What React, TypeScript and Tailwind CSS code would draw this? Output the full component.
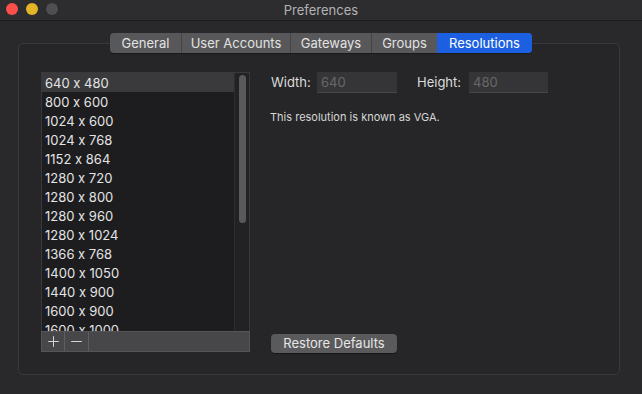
import { Plus, Minus } from "lucide-react";

const tabs = [
  { label: "General", w: "w-[71px]" },
  { label: "User Accounts", w: "w-[109px]" },
  { label: "Gateways", w: "w-[81px]" },
  { label: "Groups", w: "w-[66px]" },
  { label: "Resolutions", w: "w-[95px]", active: true },
];

const resolutions = [
  "640 x 480",
  "800 x 600",
  "1024 x 600",
  "1024 x 768",
  "1152 x 864",
  "1280 x 720",
  "1280 x 800",
  "1280 x 960",
  "1280 x 1024",
  "1366 x 768",
  "1400 x 1050",
  "1440 x 900",
  "1600 x 900",
  "1600 x 1000",
];

export default function App() {
  return (
    <div className="w-[642px] h-[394px] flex flex-col bg-[#29292b] overflow-hidden font-['Inter','Liberation_Sans',sans-serif] [font-feature-settings:'calt'_0] select-none">
      {/* title bar */}
      <div className="relative h-[21px] shrink-0 flex items-center justify-center bg-[#2d2d2f] border-b border-[#1c1c1e]">
        <div className="absolute left-[6px] top-[3px] flex gap-[8px]">
          <span className="w-[12px] h-[12px] rounded-full bg-[#fb4f4c]" />
          <span className="w-[12px] h-[12px] rounded-full bg-[#e3b527]" />
          <span className="w-[12px] h-[12px] rounded-full bg-[#4f4f51]" />
        </div>
        <span className="text-[13px] leading-none text-[#b3b3b3]">Preferences</span>
      </div>

      <div className="flex flex-col px-[18px] pt-[12px]">
        {/* tabs */}
        <div className="relative z-10 flex justify-center">
          <div className="flex h-[20px] rounded-[4px] overflow-hidden bg-[#58585a] shadow-[0_1px_1px_rgba(0,0,0,0.35)]">
            {tabs.map((t, i) => (
              <div
                key={t.label}
                className={`${t.w} flex items-center justify-center text-[13px] leading-none ${
                  t.active ? "bg-[#1c5fe0] text-white" : "text-[#e2e2e2]"
                } ${i > 0 && !t.active ? "border-l border-[#444446]" : ""}`}
              >
                {t.label}
              </div>
            ))}
          </div>
        </div>

        {/* group box */}
        <div className="-mt-[10px] w-[602px] h-[332px] rounded-[5px] border border-[#39393b] bg-[#262628] flex px-[22px] pt-[28px] pb-[21px] gap-[20px]">
          {/* list column */}
          <div className="w-[209px] flex flex-col">
            <div className="flex h-[259px] border border-b-0 border-[#39393b] bg-[#1d1d1f] overflow-hidden">
              <div className="flex-1 flex flex-col">
                {resolutions.map((r, i) => (
                  <div
                    key={r}
                    className={`h-[19px] shrink-0 pl-[3px] flex items-center text-[13px] leading-none text-[#e4e4e4] ${
                      i === 0 ? "bg-[#3a3a3c]" : ""
                    }`}
                  >
                    <span className="pt-[2px]">{r}</span>
                  </div>
                ))}
              </div>
              <div className="w-[15px] shrink-0 bg-[#222224] border-l border-[#2e2e30] flex justify-center pt-[2px]">
                <div className="w-[7px] h-[148px] rounded-full bg-[#59595b]" />
              </div>
            </div>
            <div className="h-[21px] flex bg-[#47474a] border border-[#555557]">
              <div className="w-[23px] flex items-center justify-center border-r border-[#5f5f61]">
                <Plus size={17} strokeWidth={1.4} className="text-[#d4d4d4]" />
              </div>
              <div className="w-[24px] flex items-center justify-center border-r border-[#5f5f61]">
                <Minus size={17} strokeWidth={1.4} className="text-[#d4d4d4]" />
              </div>
            </div>
          </div>

          {/* detail column */}
          <div className="flex-1 flex flex-col justify-between">
            <div className="flex flex-col">
              <div className="flex items-center h-[21px] text-[13px] leading-none">
                <span className="pl-[1px] w-[47px] text-[#dcdcdc]">Width:</span>
                <div className="w-[80px] h-[21px] bg-[#353537] border-b border-[#47474a] flex items-center pl-[4px] text-[#68686a]">
                  640
                </div>
                <span className="ml-[20px] w-[52px] text-[#dcdcdc]">Height:</span>
                <div className="w-[79px] h-[21px] bg-[#353537] border-b border-[#47474a] flex items-center pl-[4px] text-[#68686a]">
                  480
                </div>
              </div>
              <p className="mt-[19px] text-[11px] leading-none text-[#d6d6d6]">This resolution is known as VGA.</p>
            </div>
            <div className="pl-[1px]">
              <button className="w-[126px] h-[19px] rounded-[4px] bg-[#5a5a5c] shadow-[0_1px_1px_rgba(0,0,0,0.4)] text-[13px] leading-none text-[#e6e6e6] flex items-center justify-center">
                Restore Defaults
              </button>
            </div>
          </div>
        </div>
      </div>
    </div>
  );
}
